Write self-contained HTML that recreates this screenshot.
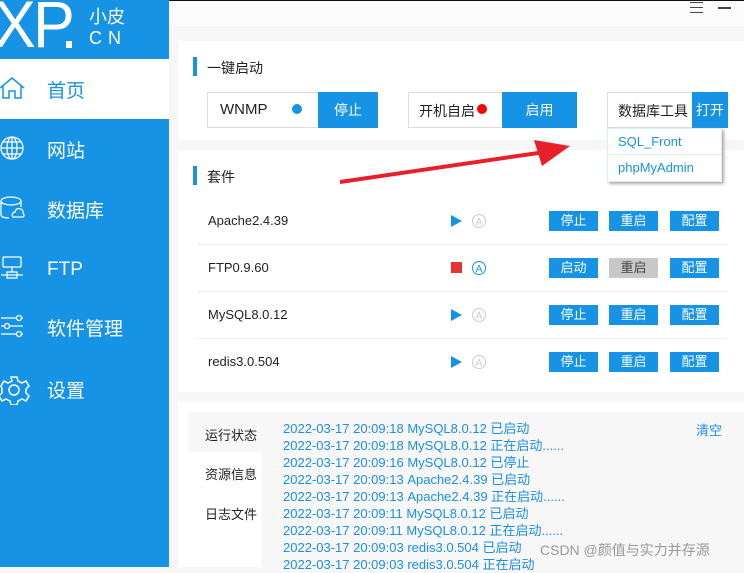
<!DOCTYPE html>
<html><head><meta charset="utf-8"><style>
*{margin:0;padding:0;box-sizing:border-box}
body{width:744px;height:567px;overflow:hidden;background:#f7f7f7;font-family:"Liberation Sans","Noto Sans CJK SC",sans-serif;position:relative}
.a{position:absolute;white-space:nowrap}
.side{left:0;top:0;width:169px;height:567px;background:#1793e6}
.nav{left:0;width:169px;height:60px;color:#fff;font-size:19px}
.nav span{position:absolute;left:47px;top:17px}
.nav svg{position:absolute;left:0;top:16px}
.btn{background:#1793e6;color:#fff;font-size:13px;text-align:center}
.box{background:#fff;border:1px solid #ddd;font-size:15px;color:#222}
.sm{height:20px;line-height:20px;font-size:13px}
.row{left:197px;width:530px;height:47px;border-bottom:1px solid #eee}
.row .n{position:absolute;left:11px;top:15px;font-size:13px;color:#222}
.log{left:283px;font-size:13px;color:#1a8fe3;line-height:17px}
</style></head><body>
<div class="a" style="left:0;top:0;width:744px;height:1px;background:#111"></div>
<div class="a" style="left:169px;top:1px;width:575px;height:25px;background:#fcfcfc"></div>
<div class="a" style="left:690px;top:2px;width:13px;height:1px;background:#444"></div>
<div class="a" style="left:690px;top:7px;width:13px;height:1px;background:#444"></div>
<div class="a" style="left:690px;top:12px;width:13px;height:1px;background:#444"></div>
<div class="a" style="left:718px;top:7px;width:13px;height:2px;background:#444"></div>
<div class="a side"></div>
<div class="a" style="left:-6px;top:-14px;color:#fff;font-size:66px;font-weight:normal;letter-spacing:-3px;transform:scaleX(0.95);transform-origin:left">XP</div>
<div class="a" style="left:66px;top:41px;width:6px;height:7px;background:#fff"></div>
<div class="a" style="left:89px;top:3px;color:#fff;font-size:18px">小皮</div>
<div class="a" style="left:89px;top:28px;color:#fff;font-size:18px;letter-spacing:6px">CN</div>
<div class="a nav" style="top:59px;background:#fff;color:#1793e6"><svg width="26" height="26" viewBox="0 0 26 26" fill="none" stroke="#1793e6" stroke-width="1.5"><path d="M0 13L12 3l12 10M3 11v12h6v-7h6v7h6V11"/></svg><span>首页</span></div>
<div class="a nav" style="top:119px"><svg width="26" height="26" viewBox="0 0 26 26" fill="none" stroke="#fff" stroke-width="1.3"><circle cx="12" cy="13" r="11"/><ellipse cx="12" cy="13" rx="5" ry="11"/><path d="M1 13h22M3 7h18M3 19h18M12 2v22"/></svg><span>网站</span></div>
<div class="a nav" style="top:179px"><svg width="26" height="26" viewBox="0 0 26 26" fill="none" stroke="#fff" stroke-width="1.3"><ellipse cx="11" cy="6" rx="10" ry="4"/><path d="M1 6v14c0 2 4 3 8 3M21 6v6"/><path d="M13 22a3 3 0 0 1 2-5 4 4 0 0 1 8 1 2.5 2.5 0 0 1 0 4z"/></svg><span>数据库</span></div>
<div class="a nav" style="top:239px"><svg width="26" height="26" viewBox="0 0 26 26" fill="none" stroke="#fff" stroke-width="1.3"><rect x="3" y="2" width="18" height="10" rx="1"/><path d="M12 12v5M1 20h22"/><rect x="7" y="17" width="10" height="6"/></svg><span style="top:20px">FTP</span></div>
<div class="a nav" style="top:297px"><svg width="26" height="26" viewBox="0 0 26 26" fill="none" stroke="#fff" stroke-width="1.3"><path d="M1 5h22M1 13h22M1 21h22"/><circle cx="19" cy="5" r="2.5" fill="#1793e6"/><circle cx="7" cy="13" r="2.5" fill="#1793e6"/><circle cx="19" cy="21" r="2.5" fill="#1793e6"/></svg><span>软件管理</span></div>
<div class="a nav" style="top:359px"><svg width="30" height="30" viewBox="0 0 30 30" fill="none" stroke="#fff" stroke-width="1.5"><path d="M11 2h6l1 4 4 2 4-2 3 5-3 3v4l3 3-3 5-4-2-4 2-1 4h-6l-1-4-4-2-4 2-3-5 3-3v-4L1 11l3-5 4 2 4-2z"/><circle cx="14" cy="15" r="5"/></svg><span>设置</span></div>

<div class="a" style="left:178px;top:41px;width:566px;height:99px;background:#fff"></div>
<div class="a" style="left:178px;top:150px;width:566px;height:242px;background:#fff"></div>
<div class="a" style="left:193px;top:57px;width:4px;height:19px;background:#1793e6"></div>
<div class="a" style="left:207px;top:58px;font-size:14px;color:#222">一键启动</div>
<div class="a box" style="left:207px;top:92px;width:112px;height:36px;padding:8px 0 0 12px">WNMP</div>
<div class="a" style="left:292px;top:104px;width:10px;height:10px;border-radius:50%;background:#1793e6"></div>
<div class="a btn" style="left:318px;top:92px;width:60px;height:36px;line-height:36px;font-size:14px">停止</div>
<div class="a box" style="left:408px;top:92px;width:95px;height:36px;padding:8px 0 0 10px;font-size:14px">开机自启</div>
<div class="a" style="left:477px;top:104px;width:10px;height:10px;border-radius:50%;background:#f00"></div>
<div class="a btn" style="left:502px;top:92px;width:75px;height:36px;line-height:36px;font-size:14px">启用</div>
<div class="a box" style="left:607px;top:92px;width:86px;height:36px;padding:8px 0 0 10px;font-size:14px">数据库工具</div>
<div class="a btn" style="left:692px;top:92px;width:36px;height:36px;line-height:36px;font-size:14px">打开</div>
<div class="a" style="left:607px;top:128px;width:115px;height:54px;background:#fff;border:1px solid #dceefa;box-shadow:2px 2px 3px #aaa"></div>
<div class="a" style="left:608px;top:154px;width:113px;height:1px;background:#dceefa"></div>
<div class="a" style="left:618px;top:134px;font-size:13px;color:#1793e6">SQL_Front</div>
<div class="a" style="left:618px;top:160px;font-size:13px;color:#1793e6">phpMyAdmin</div>

<div class="a" style="left:193px;top:166px;width:4px;height:19px;background:#1793e6"></div>
<div class="a" style="left:207px;top:167px;font-size:14px;color:#222">套件</div>

<div class="a row" style="top:198px"><div class="n">Apache2.4.39</div></div>
<div class="a row" style="top:245px"><div class="n">FTP0.9.60</div></div>
<div class="a row" style="top:292px"><div class="n">MySQL8.0.12</div></div>
<div class="a row" style="top:339px;border:none"><div class="n">redis3.0.504</div></div>

<svg class="a" style="left:0;top:0" width="744" height="567">
<g fill="#1793e6"><path d="M451 215l11 6-11 6z"/><path d="M451 309l11 6-11 6z"/><path d="M451 356l11 6-11 6z"/></g>
<rect x="451" y="262" width="11" height="11" fill="#e53333"/>
<g fill="none" stroke-width="1"><circle cx="479" cy="221" r="6.5" stroke="#ccc"/><circle cx="479" cy="268" r="6.5" stroke="#1793e6"/><circle cx="479" cy="315" r="6.5" stroke="#ccc"/><circle cx="479" cy="362" r="6.5" stroke="#ccc"/></g>
<g font-size="10" text-anchor="middle" font-family="Liberation Sans"><text x="479" y="225" fill="#ccc">A</text><text x="479" y="272" fill="#1793e6">A</text><text x="479" y="319" fill="#ccc">A</text><text x="479" y="366" fill="#ccc">A</text></g>
</svg>

<div class="a btn sm" style="left:549px;top:211px;width:49px">停止</div>
<div class="a btn sm" style="left:609px;top:211px;width:49px">重启</div>
<div class="a btn sm" style="left:670px;top:211px;width:49px">配置</div>
<div class="a btn sm" style="left:549px;top:258px;width:49px">启动</div>
<div class="a btn sm" style="left:609px;top:258px;width:49px;background:#c8c8c8;color:#444">重启</div>
<div class="a btn sm" style="left:670px;top:258px;width:49px">配置</div>
<div class="a btn sm" style="left:549px;top:305px;width:49px">停止</div>
<div class="a btn sm" style="left:609px;top:305px;width:49px">重启</div>
<div class="a btn sm" style="left:670px;top:305px;width:49px">配置</div>
<div class="a btn sm" style="left:549px;top:352px;width:49px">停止</div>
<div class="a btn sm" style="left:609px;top:352px;width:49px">重启</div>
<div class="a btn sm" style="left:670px;top:352px;width:49px">配置</div>

<div class="a" style="left:178px;top:402px;width:566px;height:165px;background:#fff"></div>
<div class="a" style="left:188px;top:412px;width:556px;height:155px;background:#f7f7f7"></div>
<div class="a" style="left:188px;top:452px;width:74px;height:115px;background:#fff"></div>
<div class="a" style="left:205px;top:425px;font-size:13px;color:#222">运行状态</div>
<div class="a" style="left:205px;top:464px;font-size:13px;color:#222">资源信息</div>
<div class="a" style="left:205px;top:504px;font-size:13px;color:#222">日志文件</div>
<div class="a" style="left:696px;top:420px;font-size:13px;color:#1a8fe3">清空</div>
<div class="a log" style="top:420px">2022-03-17 20:09:18 MySQL8.0.12 已启动<br>2022-03-17 20:09:18 MySQL8.0.12 正在启动......<br>2022-03-17 20:09:16 MySQL8.0.12 已停止<br>2022-03-17 20:09:13 Apache2.4.39 已启动<br>2022-03-17 20:09:13 Apache2.4.39 正在启动......<br>2022-03-17 20:09:11 MySQL8.0.12 已启动<br>2022-03-17 20:09:11 MySQL8.0.12 正在启动......<br>2022-03-17 20:09:03 redis3.0.504 已启动<br>2022-03-17 20:09:03 redis3.0.504 正在启动</div>
<div class="a" style="left:540px;top:540px;font-size:14px;color:#999">CSDN @颜值与实力并存源</div>

<svg class="a" style="left:0;top:0" width="744" height="567"><path d="M340 182L545 152" stroke="#e8202a" stroke-width="4"/><path d="M570 146L534 140L542 166z" fill="#e8202a"/></svg>
</body></html>
